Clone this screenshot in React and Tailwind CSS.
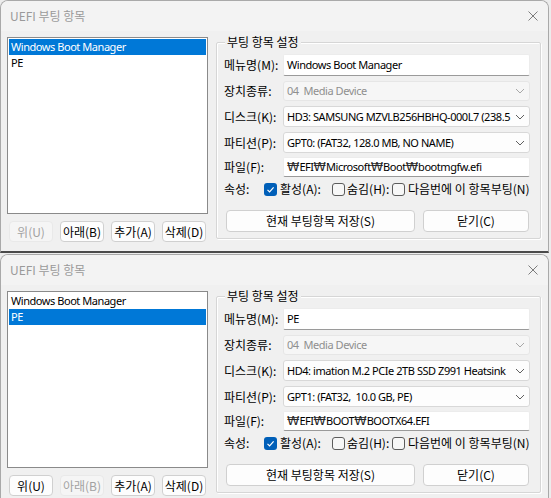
import React from 'react'

const windows = [
  {
    selected: 0,
    upDisabled: true,
    downDisabled: false,
    name: 'Windows Boot Manager',
    disk: 'HD3: SAMSUNG MZVLB256HBHQ-000L7 (238.5',
    part: 'GPT0: (FAT32, 128.0 MB, NO NAME)',
    file: '₩EFI₩Microsoft₩Boot₩bootmgfw.efi',
  },
  {
    selected: 1,
    upDisabled: false,
    downDisabled: true,
    name: 'PE',
    disk: 'HD4: imation M.2 PCIe 2TB SSD Z991 Heatsink',
    part: 'GPT1: (FAT32,  10.0 GB, PE)',
    file: '₩EFI₩BOOT₩BOOTX64.EFI',
  },
]

const entries = ['Windows Boot Manager', 'PE']

// latin-heavy values: narrower face to match the dialog's font widths
const val = "font-['Noto_Sans','Noto_Sans_CJK_KR',sans-serif] text-[11px] tracking-[-0.45px]"

const Chevron = ({ light }) => (
  <svg width="10" height="6" viewBox="0 0 10 6" className="shrink-0">
    <path d="M1 1 L5 5 L9 1" fill="none" stroke={light ? '#a8a8a8' : '#606060'} strokeWidth="1" />
  </svg>
)

const Btn = ({ children, disabled, className = '' }) => (
  <div
    className={
      'flex items-center justify-center rounded-[4px] border ' +
      (disabled
        ? 'bg-[#f5f5f5] border-[#e9e9e9] text-[#a2a2a2] '
        : 'bg-[#fdfdfd] border-[#d0d0d0] text-black ') +
      className
    }
  >
    {children}
  </div>
)

const Label = ({ children }) => <div className="w-[59px] shrink-0 whitespace-pre">{children}</div>

// the path separator shows as a wide won sign in the Korean system font
const Path = ({ text }) => (
  <>
    {text.split('₩').map((part, i) => (
      <React.Fragment key={i}>
        {i > 0 && <span className="font-['DejaVu_Sans',sans-serif] text-[12.5px] tracking-[0px] text-[#2a2a2a]">₩</span>}
        {part}
      </React.Fragment>
    ))}
  </>
)

const Combo = ({ text, disabled, h }) => (
  <div
    className={
      'w-[247px] flex items-center pl-[3px] pr-[4px] rounded-[3px] border ' +
      h +
      (disabled ? ' bg-[#f6f6f6] border-[#e6e6e6] text-[#8f8f8f]' : ' bg-[#fdfdfd] border-[#d8d8d8]')
    }
  >
    <span className={'flex-1 overflow-hidden whitespace-pre ' + val}>{text}</span>
    <Chevron light={disabled} />
  </div>
)

const Edit = ({ children, h }) => (
  <div
    className={
      'w-[247px] flex items-center pl-[3px] bg-white border border-[#ececec] border-b-[#9a9a9a] rounded-[2px] whitespace-pre ' +
      val +
      ' ' +
      h
    }
  >
    {children}
  </div>
)

const Check = ({ checked }) =>
  checked ? (
    <div className="w-[13px] h-[13px] rounded-[3px] bg-[#005fb8] flex items-center justify-center">
      <svg width="11" height="11" viewBox="0 0 11 11">
        <path d="M2.5 5.8 L4.6 7.9 L8.6 3.4" fill="none" stroke="#fff" strokeWidth="1.2" />
      </svg>
    </div>
  ) : (
    <div className="w-[13px] h-[13px] rounded-[3px] border border-[#5c5c5c] bg-[#f7f7f7]" />
  )

const Window = ({ w, last }) => (
  <div
    className={
      'w-[549px] shrink-0 flex flex-col bg-[#f0f0f0] border-x border-t border-[#a9a9a9] rounded-t-[8px] overflow-hidden ' +
      (last ? 'h-[254px]' : 'h-[253px] border-b-2 border-b-[#4a4a4a]')
    }
  >
    <div className="h-[30px] shrink-0 flex items-center justify-between pl-[9px] pr-[8px] bg-[#f3f3f3] text-[#9a9a9a]">
      <span>UEFI 부팅 항목</span>
      <svg width="10" height="10" viewBox="0 0 10 10" className="mr-[2px]">
        <path d="M0.5 0.5 L9.5 9.5 M9.5 0.5 L0.5 9.5" stroke="#7c7c7c" strokeWidth="1" />
      </svg>
    </div>

    <div className="flex items-start pl-[6px] pt-[6px]">
      <div className="w-[201px] flex flex-col">
        <div className="h-[177px] bg-white border border-[#8a8a8a] pt-[1px] px-[1px]">
          {entries.map((e, i) => (
            <div
              key={e}
              className={
                'h-[16px] flex items-center pl-[2px] ' +
                val +
                ' ' +
                (i === w.selected ? 'bg-[#0078d7] text-white' : 'text-black')
              }
            >
              {e}
            </div>
          ))}
        </div>
        <div className="flex gap-[7px] mt-[7px] ml-[2px]">
          <Btn disabled={w.upDisabled} className="w-[44px] h-[21px]">위(U)</Btn>
          <Btn disabled={w.downDisabled} className="w-[44px] h-[21px]">아래(B)</Btn>
          <Btn className="w-[44px] h-[21px]">추가(A)</Btn>
          <Btn className="w-[44px] h-[21px]">삭제(D)</Btn>
        </div>
      </div>

      <div className="relative ml-[8px] mt-[5px] w-[325px] h-[197px] border border-[#d6d6d6] rounded-[2px] shadow-[inset_1px_1px_0_#ffffff,1px_1px_0_#ffffff] pl-[7px] pt-[11px] flex flex-col">
        <div className="absolute left-[8px] -top-[9px] px-[2px] bg-[#f0f0f0] leading-[16px]">부팅 항목 설정</div>

        <div className="flex items-center">
          <Label>메뉴명(M):</Label>
          <Edit h="h-[22px]">{w.name}</Edit>
        </div>
        <div className="flex items-center mt-[5px]">
          <Label>장치종류:</Label>
          <Combo text="04  Media Device" disabled h="h-[20px]" />
        </div>
        <div className="flex items-center mt-[5px]">
          <Label>디스크(K):</Label>
          <Combo text={w.disk} h="h-[21px]" />
        </div>
        <div className="flex items-center mt-[5px]">
          <Label>파티션(P):</Label>
          <Combo text={w.part} h="h-[21px]" />
        </div>
        <div className="flex items-center mt-[4px]">
          <Label>파일(F):</Label>
          <Edit h="h-[20px]">
            <Path text={w.file} />
          </Edit>
        </div>
        <div className="flex items-center h-[16px] mt-[4px]">
          <div className="w-[40px] shrink-0">속성:</div>
          <div className="w-[68px] shrink-0 flex items-center gap-[3px]">
            <Check checked />
            <span>활성(A):</span>
          </div>
          <div className="w-[60px] shrink-0 flex items-center gap-[2px]">
            <Check />
            <span>숨김(H):</span>
          </div>
          <div className="flex items-center gap-[3px]">
            <Check />
            <span className="whitespace-nowrap">다음번에 이 항목부팅(N)</span>
          </div>
        </div>
        <div className="flex gap-[8px] mt-[13px] ml-[2px]">
          <Btn className="w-[189px] h-[22px]">현재 부팅항목 저장(S)</Btn>
          <Btn className="w-[106px] h-[22px]">닫기(C)</Btn>
        </div>
      </div>
    </div>
  </div>
)

const App = () => {
  return (
    <div className="w-[551px] h-[498px] overflow-hidden bg-[#ececec] flex flex-col font-['Noto_Sans_CJK_KR',sans-serif] text-[12px] leading-[16px] text-black">
      <Window w={windows[0]} />
      <div className="h-[1px] shrink-0" />
      <Window w={windows[1]} last />
    </div>
  )
}

export default App
